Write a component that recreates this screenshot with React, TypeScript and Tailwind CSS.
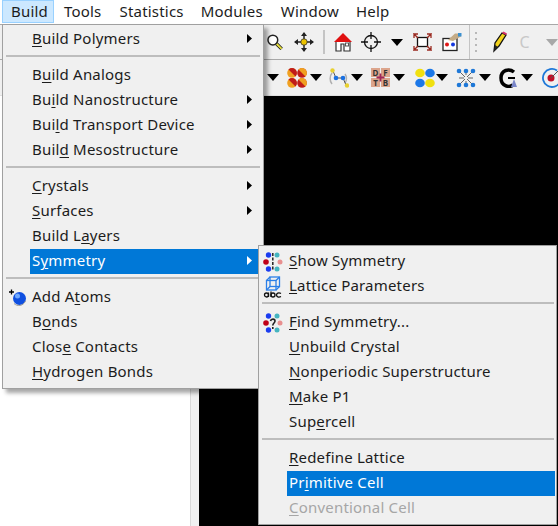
const font = "font-['Noto_Sans','Open_Sans',sans-serif]";

function Label({ text, at }: { text: string; at: number }) {
  return (
    <span className="whitespace-nowrap pb-[2px]">
      {text.slice(0, at)}
      <u className="underline underline-offset-2">{text[at]}</u>
      {text.slice(at + 1)}
    </span>
  );
}

function Caret({ gray }: { gray?: boolean }) {
  return (
    <svg width="12" height="7" viewBox="0 0 12 7" className="shrink-0">
      <path d="M0 0H12L6 7Z" fill={gray ? "#a8a8a8" : "#000"} />
    </svg>
  );
}

function Row({
  text,
  at,
  arrow,
  active,
  disabled,
  icon,
  gutter,
}: {
  text: string;
  at: number;
  arrow?: boolean;
  active?: boolean;
  disabled?: boolean;
  icon?: React.ReactNode;
  gutter: string;
}) {
  return (
    <div className="flex h-[25px]">
      <div className={`${gutter} flex shrink-0 items-center justify-center`}>{icon}</div>
      <div
        className={`flex flex-1 items-center justify-between pl-[2px] pr-[11px] ${
          active ? "bg-[#0078d7] text-white" : disabled ? "text-[#a6a6a6]" : "text-[#1c1c1c]"
        }`}
      >
        <Label text={text} at={at} />
        {arrow && (
          <svg width="5" height="9" viewBox="0 0 5 9" className="mb-[3px]">
            <path d="M0 0L5 4.5L0 9Z" fill={active ? "#fff" : "#000"} />
          </svg>
        )}
      </div>
    </div>
  );
}

function Sep({ wide }: { wide?: boolean }) {
  return (
    <div className="flex h-[11px] pt-[3px]">
      <div className={`ml-[3px] h-[2px] flex-1 bg-[#bdbdbd] ${wide ? "mr-[1px]" : "mr-[3px]"}`} />
    </div>
  );
}

function SymIcon({ mark }: { mark?: boolean }) {
  return (
    <svg width="20" height="20" viewBox="0 0 20 20">
      <circle cx="5.500" cy="3" r="2.700" fill="#1a3cf0" />
      <circle cx="14" cy="3" r="2.500" fill="#45b5c0" />
      <circle cx="3" cy="10" r="2.800" fill="#c00018" />
      <circle cx="17" cy="10" r="2.500" fill="#e89090" />
      <circle cx="5.500" cy="17" r="2.700" fill="#1a3cf0" />
      <circle cx="14" cy="17" r="2.500" fill="#45b5c0" />
      {mark ? (
        <path d="M7.500 8C8 5.500 12 5.500 12 8C12 10 9.800 10 9.800 12.500M9.800 14V16" fill="none" stroke="#222" strokeWidth="1.600" />
      ) : (
        <path d="M9.800 1V19" stroke="#222" strokeWidth="1.500" strokeDasharray="3 1.500" />
      )}
    </svg>
  );
}

function LatticeIcon() {
  return (
    <svg width="20" height="22" viewBox="0 0 20 22">
      <g fill="none" stroke="#2a7fe8" strokeWidth="1.300">
        <rect x="3.500" y="4.500" width="9.500" height="9.500" />
        <rect x="7" y="1" width="9.500" height="9.500" />
        <path d="M3.500 4.500L7 1M13 4.500L16.500 1M3.500 14L7 10.500M13 14L16.500 10.500" />
      </g>
      <path d="M0 15.500H20V21.500H0Z" fill="#f0f0f0" />
      <g fill="none" stroke="#111" strokeWidth="1.300">
        <circle cx="3.500" cy="19" r="2" />
        <path d="M5.500 16.500V21" />
        <circle cx="10" cy="19" r="2" />
        <path d="M8 15.500V21" />
        <path d="M18 17.500C15.500 16 13.500 17.500 13.500 19C13.500 20.500 15.500 21.800 18 20.500" />
      </g>
    </svg>
  );
}

function AddAtomIcon() {
  return (
    <svg width="20" height="20" viewBox="0 0 20 20">
      <path d="M2 4H7M4.500 1.500V6.500" stroke="#000" strokeWidth="1.300" />
      <circle cx="12.500" cy="10.500" r="6.500" fill="#0f4fe0" />
      <circle cx="10.500" cy="8" r="2.500" fill="#6fa8ff" />
      <path d="M7 15.500C10 18.500 16 18.500 18.500 13" fill="none" stroke="#9a9a9a" strokeWidth="1" />
    </svg>
  );
}

function Magnifier() {
  return (
    <svg width="18" height="18" viewBox="0 0 18 18">
      <path d="M10.500 10.500L16 16" stroke="#111" strokeWidth="3.500" />
      <path d="M10.500 10.500L16 16" stroke="#e8e040" strokeWidth="2" />
      <circle cx="7" cy="7" r="5" fill="#fff" stroke="#222" strokeWidth="1.500" />
    </svg>
  );
}

function MoveIcon() {
  return (
    <svg width="20" height="20" viewBox="0 0 20 20">
      <path d="M10 1V19M1 10H19" stroke="#222" strokeWidth="1.500" />
      <path d="M10 0L7 4H13ZM10 20L7 16H13ZM0 10L4 7V13ZM20 10L16 7V13Z" fill="#222" />
      <circle cx="10" cy="10" r="3.200" fill="#ecc400" stroke="#333" strokeWidth="0.800" />
    </svg>
  );
}

function HomeIcon() {
  return (
    <svg width="20" height="20" viewBox="0 0 20 20">
      <path d="M3 9V19H8V12H11V19H17V9" fill="#fff" stroke="#333" strokeWidth="1.200" />
      <rect x="12.500" y="11" width="3" height="3" fill="none" stroke="#555" />
      <path d="M10 1L1 10H19Z" fill="#e01010" />
    </svg>
  );
}

function TargetIcon() {
  return (
    <svg width="20" height="20" viewBox="0 0 20 20" fill="none" stroke="#111" strokeWidth="1.300">
      <circle cx="10" cy="10" r="6.500" />
      <path d="M10 0V7M10 13V20M0 10H7M13 10H20" />
    </svg>
  );
}

function FullIcon() {
  return (
    <svg width="19" height="18" viewBox="0 0 19 18">
      <rect x="4.500" y="4.500" width="10" height="9" fill="#fff" stroke="#111" strokeWidth="1.300" />
      <path d="M1 5V1H5L1 1L5 5M18 5V1H14L18 1L14 5M1 13V17H5L1 17L5 13M18 13V17H14L18 17L14 13" fill="none" stroke="#9a2a20" strokeWidth="1.300" />
    </svg>
  );
}

function StructIcon() {
  return (
    <svg width="20" height="20" viewBox="0 0 20 20">
      <rect x="1" y="6.500" width="14" height="12" fill="#fff" stroke="#222" strokeWidth="1.300" />
      <path d="M6 8L13 1.500H19V4.500L11 9Z" fill="#c4ab86" />
      <path d="M16 1H19.500V4.500H16Z" fill="#3a90d0" />
      <circle cx="5" cy="12.500" r="2" fill="#e01818" />
      <circle cx="11" cy="12.500" r="2" fill="#1438e0" />
    </svg>
  );
}

function Pencil() {
  return (
    <svg width="16" height="22" viewBox="0 0 16 22">
      <path d="M2 20L3 12L10 2L14 4L7 15Z" fill="#f2d21c" stroke="#111" strokeWidth="1.300" />
      <path d="M10 2L14 4L15 2.500L11.500 0.500Z" fill="#d8306a" />
      <path d="M2 20L3 14L6 16Z" fill="#222" />
    </svg>
  );
}

function Grip() {
  return (
    <div className="flex flex-col gap-[4px]">
      {[0, 1, 2, 3].map((i) => (
        <div key={i} className="h-[2px] w-[2px] bg-[#b8b8b8]" />
      ))}
    </div>
  );
}

function FourDots() {
  return (
    <svg width="20" height="20" viewBox="0 0 20 20">
      <circle cx="5" cy="5" r="4.800" fill="#f0a020" />
      <path d="M1.500 1.500A4.800 4.800 0 0 1 8.500 8.500Z" fill="#c01c18" />
      <circle cx="15" cy="5" r="4.800" fill="#c01c18" />
      <path d="M11.500 1.500A4.800 4.800 0 0 1 18.500 8.500Z" fill="#f0a020" />
      <circle cx="5" cy="15" r="4.800" fill="#f0a020" />
      <path d="M1.500 11.500A4.800 4.800 0 0 1 8.500 18.500Z" fill="#c01c18" />
      <circle cx="15" cy="15" r="4.800" fill="#c01c18" />
      <path d="M11.500 11.500A4.800 4.800 0 0 1 18.500 18.500Z" fill="#f0a020" />
    </svg>
  );
}

function Chain() {
  return (
    <svg width="20" height="20" viewBox="0 0 20 20">
      <path d="M3 5C0.500 8 0.500 13 3 16M16 6C18 9 18 12 16 15" fill="none" stroke="#b0b0b0" strokeWidth="1.500" />
      <path d="M4 3L7 10H14L17 17" fill="none" stroke="#555" strokeWidth="1" />
      <circle cx="3.500" cy="2.500" r="2.200" fill="#e8d030" />
      <circle cx="7" cy="10" r="2.300" fill="#1a70e0" />
      <circle cx="14" cy="10" r="2.300" fill="#1a70e0" />
      <circle cx="18" cy="17.500" r="2.200" fill="#e8d030" />
    </svg>
  );
}

function Dft() {
  return (
    <div className="relative grid h-[19px] w-[19px] grid-cols-2 gap-[1px] text-[8px] font-bold leading-none tracking-normal text-[#333]">
      {["D", "F", "T", "B"].map((c) => (
        <div key={c} className="flex items-center justify-center bg-[#dca58c]">
          {c}
        </div>
      ))}
      <svg width="9" height="9" viewBox="0 0 9 9" className="absolute left-[5px] top-[5px]">
        <path d="M4.500 0.500V8.500M0.500 4.500H8.500" stroke="#a02858" strokeWidth="1.800" />
      </svg>
    </div>
  );
}

function BlueYellow() {
  return (
    <svg width="20" height="20" viewBox="0 0 20 20">
      <ellipse cx="5" cy="5" rx="4.800" ry="4.300" fill="#f0e010" />
      <ellipse cx="15" cy="5" rx="4.800" ry="4.300" fill="#1c78e8" />
      <ellipse cx="5" cy="15" rx="4.800" ry="4.300" fill="#1c78e8" />
      <ellipse cx="15" cy="15" rx="4.800" ry="4.300" fill="#f0e010" />
    </svg>
  );
}

function Net() {
  return (
    <svg width="20" height="20" viewBox="0 0 20 20">
      <path d="M3 3L9 9M17 3L11 9M3 17L9 11M17 17L11 11M3 10H8M12 10H17M10 2V7M10 13V18" stroke="#666" strokeWidth="1" />
      {[
        [3, 3],
        [17, 3],
        [3, 17],
        [17, 17],
        [10, 3],
        [10, 17],
      ].map(([x, y]) => (
        <circle key={`${x}-${y}`} cx={x} cy={y} r="2.300" fill="#1e78d8" />
      ))}
    </svg>
  );
}

function GIcon() {
  return (
    <svg width="20" height="20" viewBox="0 0 20 20">
      <path d="M15 4C10 0 2 2 2 10C2 18 10 20 14 17" fill="none" stroke="#000" strokeWidth="3.500" />
      <path d="M9 10H16" stroke="#000" strokeWidth="2" />
      <path d="M12 19L15 11L18 19Z" fill="#7a86c8" />
    </svg>
  );
}

function Orbit() {
  return (
    <svg width="20" height="22" viewBox="0 0 20 22">
      <path d="M16 3.500A9 9 0 1 0 19 15" fill="none" stroke="#1e78d8" strokeWidth="1.800" />
      <circle cx="10" cy="11" r="3.500" fill="#c01028" />
      <path d="M10 11L17 4" stroke="#555" strokeWidth="1" />
    </svg>
  );
}

export default function App() {
  const menuBar = [
    { label: "Tools", cls: "ml-[10px]" },
    { label: "Statistics", cls: "ml-[18px]" },
    { label: "Modules", cls: "ml-[17px]" },
    { label: "Window", cls: "ml-[18px]" },
    { label: "Help", cls: "ml-[17px]" },
  ];

  return (
    <div className={`${font} relative h-[526px] w-[558px] overflow-hidden bg-white text-[15px] leading-none tracking-[0.2px]`}>
      {/* Menu bar */}
      <div className="flex h-[24px] items-center pb-[2px] pl-[2px] text-[#1c1c1c]">
        <div className="flex h-[23px] w-[52px] items-center self-start border border-[#99d1ff] bg-[#cce8ff] pb-[1px] pl-[8px]">Build</div>
        {menuBar.map((m) => (
          <span key={m.label} className={m.cls}>
            {m.label}
          </span>
        ))}
      </div>

      {/* Toolbars */}
      <div className="flex h-[36px] items-center border-y border-[#a8a8a8] bg-[#f0f0f0] pl-[266px]">
        <Magnifier />
        <div className="ml-[10px]">
          <MoveIcon />
        </div>
        <div className="ml-[9px] h-[24px] w-[2px] bg-[#c4c4c4]" />
        <div className="ml-[8px]">
          <HomeIcon />
        </div>
        <div className="ml-[8px]">
          <TargetIcon />
        </div>
        <div className="ml-[10px]">
          <Caret />
        </div>
        <div className="ml-[10px]">
          <FullIcon />
        </div>
        <div className="ml-[10px]">
          <StructIcon />
        </div>
        <div className="ml-[7px] mr-[5px] h-[34px] w-[1px] bg-[#c4c4c4]" />
        <Grip />
        <div className="ml-[15px]">
          <Pencil />
        </div>
        <span className="ml-[12px] w-[24px] text-[16px] text-[#c8c8c8]">C</span>
        <div className="ml-[3px]">
          <Caret gray />
        </div>
      </div>
      <div className="flex h-[36px] items-center border-b border-[#e0e0e0] bg-[#f0f0f0] pl-[267px]">
        <Caret />
        <div className="ml-[8px]">
          <FourDots />
        </div>
        <div className="ml-[3px]">
          <Caret />
        </div>
        <div className="ml-[7px]">
          <Chain />
        </div>
        <div className="ml-[2px]">
          <Caret />
        </div>
        <div className="ml-[8px]">
          <Dft />
        </div>
        <div className="ml-[3px]">
          <Caret />
        </div>
        <div className="ml-[10px]">
          <BlueYellow />
        </div>
        <div className="ml-[1px]">
          <Caret />
        </div>
        <div className="ml-[8px]">
          <Net />
        </div>
        <div className="ml-[3px]">
          <Caret />
        </div>
        <div className="ml-[8px]">
          <GIcon />
        </div>
        <div className="ml-[2px]">
          <Caret />
        </div>
        <div className="ml-[8px]">
          <Orbit />
        </div>
      </div>

      {/* Workspace */}
      <div className="flex h-[430px]">
        <div className="w-[190px] bg-white" />
        <div className="w-[9px] border-l border-[#d8d8d8] bg-[#f0f0f0]" />
        <div className="flex-1 bg-black" />
      </div>

      {/* Build menu */}
      <div className="absolute left-[2px] top-[24px] flex h-[365px] w-[262px] flex-col border border-[#a0a0a0] bg-[#f0f0f0] pt-[2px] shadow-[4px_4px_4px_rgba(0,0,0,0.35)]">
        <Row gutter="w-[27px]" text="Build Polymers" at={0} arrow />
        <Sep />
        <Row gutter="w-[27px]" text="Build Analogs" at={1} />
        <Row gutter="w-[27px]" text="Build Nanostructure" at={2} arrow />
        <Row gutter="w-[27px]" text="Build Transport Device" at={3} arrow />
        <Row gutter="w-[27px]" text="Build Mesostructure" at={4} arrow />
        <Sep />
        <Row gutter="w-[27px]" text="Crystals" at={0} arrow />
        <Row gutter="w-[27px]" text="Surfaces" at={0} arrow />
        <Row gutter="w-[27px]" text="Build Layers" at={7} />
        <Row gutter="w-[27px]" text="Symmetry" at={1} arrow active />
        <Sep />
        <Row gutter="w-[27px]" text="Add Atoms" at={5} icon={<AddAtomIcon />} />
        <Row gutter="w-[27px]" text="Bonds" at={1} />
        <Row gutter="w-[27px]" text="Close Contacts" at={4} />
        <Row gutter="w-[27px]" text="Hydrogen Bonds" at={0} />
      </div>

      {/* Symmetry submenu */}
      <div className="absolute left-[258px] top-[245px] flex h-[280px] w-[299px] flex-col border border-[#a0a0a0] bg-[#f0f0f0] pr-px pt-[3px]">
        <Row gutter="w-[28px]" text="Show Symmetry" at={0} icon={<SymIcon />} />
        <Row gutter="w-[28px]" text="Lattice Parameters" at={0} icon={<LatticeIcon />} />
        <Sep wide />
        <Row gutter="w-[28px]" text="Find Symmetry..." at={0} icon={<SymIcon mark />} />
        <Row gutter="w-[28px]" text="Unbuild Crystal" at={0} />
        <Row gutter="w-[28px]" text="Nonperiodic Superstructure" at={0} />
        <Row gutter="w-[28px]" text="Make P1" at={0} />
        <Row gutter="w-[28px]" text="Supercell" at={3} />
        <Sep wide />
        <Row gutter="w-[28px]" text="Redefine Lattice" at={0} />
        <Row gutter="w-[28px]" text="Primitive Cell" at={2} active />
        <Row gutter="w-[28px]" text="Conventional Cell" at={0} disabled />
      </div>
    </div>
  );
}
